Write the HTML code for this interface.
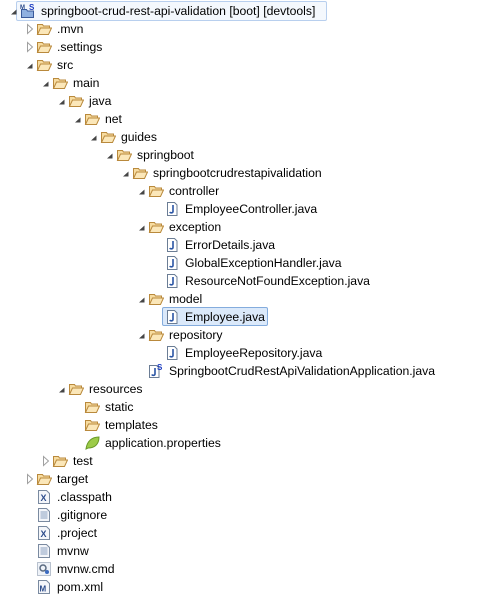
<!DOCTYPE html><html><head><style>
body{margin:0;width:491px;height:599px;background:#fff;overflow:hidden;font-family:"Liberation Sans",sans-serif;font-size:12.2px;color:#000;position:relative}
.r{position:absolute;height:18px;line-height:18px;white-space:nowrap}
.a{position:absolute;top:0;width:10px;height:18px}
.i{position:absolute;top:1px;width:16px;height:16px}
.t{position:absolute;top:0}
.sel{position:absolute;border:1px solid #84acdd;background:#dbe9fa;border-radius:2px}
</style></head><body>
<div class="sel" style="left:16px;top:1px;width:309px;height:18px;background:#f4f8fd;border-color:#b8cfee"></div>
<div class="sel" style="left:162px;top:307px;width:104px;height:17px"></div>
<svg width="0" height="0" style="position:absolute">
<defs>
<symbol id="fo" viewBox="0 0 16 16"><path d="M1.5 3.5h5l1 1.5h6v2H5l-3.5 6.5z" fill="#f7dca0" stroke="#b9893c"/><path d="M1.5 13.5L4.5 7h11l-3 6.5z" fill="#fbe7b9" stroke="#b9893c"/></symbol>
<symbol id="jv" viewBox="0 0 16 16"><path d="M3.5 1.5h7l2.5 2.5v10.5h-9.5z" fill="#fff" stroke="#6b7d95"/><path d="M9 4v6.5c0 1.5-2.5 1.8-3.2.5" fill="none" stroke="#2a55a5" stroke-width="1.6"/></symbol>
<symbol id="ex" viewBox="0 0 10 18"><path d="M2 12.5L7.5 7.5v5z" fill="#454545"/></symbol>
<symbol id="co" viewBox="0 0 10 18"><path d="M2.5 4.5l5 4.5-5 4.5z" fill="#fff" stroke="#a0a0a0"/></symbol>
<symbol id="tx" viewBox="0 0 16 16"><path d="M2.5 1.5h8l3 3v10h-11z" fill="#f4f6fa" stroke="#7a8aa0"/><path d="M4.5 5h7M4.5 7h7M4.5 9h7M4.5 11h7" stroke="#8aa0c0"/></symbol>
<symbol id="xm" viewBox="0 0 16 16"><path d="M2.5 1.5h8l3 3v10h-11z" fill="#f4f6fa" stroke="#7a8aa0"/><text x="4.5" y="12" font-size="9" font-weight="bold" fill="#2a4a8a" font-family="Liberation Sans">X</text></symbol>
<symbol id="pm" viewBox="0 0 16 16"><path d="M2.5 1.5h8l3 3v10h-11z" fill="#f4f6fa" stroke="#7a8aa0"/><text x="3.5" y="12.5" font-size="8" font-weight="bold" fill="#2a4a8a" font-family="Liberation Sans">M</text></symbol>
<symbol id="cm" viewBox="0 0 16 16"><rect x="1.5" y="1.5" width="13" height="13" fill="#eef2f8" stroke="#7a8aa0" stroke-dasharray="1 1"/><circle cx="7" cy="7" r="3" fill="none" stroke="#5a6a80" stroke-width="1.5"/><circle cx="11" cy="11" r="2" fill="#3a6ac0"/></symbol>
<symbol id="lf" viewBox="0 0 16 16"><path d="M2 14C3 6 8 2 15 2c0 8-5 11-11 11z" fill="#9ccb48" stroke="#6a9a28"/></symbol>
<symbol id="pr" viewBox="0 0 16 16"><path d="M1.5 6.5h5l1 1.5h6v6.5h-12z" fill="#8fb0e0" stroke="#3a5a9a"/><text x="0" y="6" font-size="6" fill="#2a4a8a" font-family="Liberation Sans" font-weight="bold">M</text><text x="9" y="7" font-size="8" fill="#1a3ac0" font-family="Liberation Sans" font-weight="bold">S</text></symbol>
<symbol id="sb" viewBox="0 0 16 16"><path d="M1.5 2.5h7l2.5 2.5v9.5h-9.5z" fill="#fff" stroke="#6b7d95"/><path d="M7 5v6c0 1.5-2.5 1.8-3.2.5" fill="none" stroke="#2a55a5" stroke-width="1.6"/><text x="9" y="7" font-size="8" fill="#1a3ac0" font-family="Liberation Sans" font-weight="bold">S</text></symbol>
</defs></svg>
<div id="tree"></div>
<script>
var rows=[
[0,'e','pr','springboot-crud-rest-api-validation [boot] [devtools]'],
[1,'c','fo','.mvn'],[1,'c','fo','.settings'],[1,'e','fo','src'],[2,'e','fo','main'],[3,'e','fo','java'],[4,'e','fo','net'],[5,'e','fo','guides'],[6,'e','fo','springboot'],[7,'e','fo','springbootcrudrestapivalidation'],
[8,'e','fo','controller'],[9,'','jv','EmployeeController.java'],[8,'e','fo','exception'],[9,'','jv','ErrorDetails.java'],[9,'','jv','GlobalExceptionHandler.java'],[9,'','jv','ResourceNotFoundException.java'],
[8,'e','fo','model'],[9,'','jv','Employee.java'],[8,'e','fo','repository'],[9,'','jv','EmployeeRepository.java'],[8,'','sb','SpringbootCrudRestApiValidationApplication.java'],
[3,'e','fo','resources'],[4,'','fo','static'],[4,'','fo','templates'],[4,'','lf','application.properties'],[2,'c','fo','test'],[1,'c','fo','target'],
[1,'','xm','.classpath'],[1,'','tx','.gitignore'],[1,'','xm','.project'],[1,'','tx','mvnw'],[1,'','cm','mvnw.cmd'],[1,'','pm','pom.xml']];
var h='';rows.forEach(function(r,k){var x=41+16*r[0],y=2+18*k;
h+='<div class="r" style="left:0;top:'+y+'px;width:491px">';
if(r[1])h+='<svg class="a" style="left:'+(x-32)+'px" viewBox="0 0 10 18"><use href="#'+(r[1]=='e'?'ex':'co')+'"/></svg>';
h+='<svg class="i" style="left:'+(x-21)+'px" viewBox="0 0 16 16"><use href="#'+r[2]+'"/></svg><span class="t" style="left:'+x+'px">'+r[3]+'</span></div>';});
document.getElementById('tree').innerHTML=h;
</script>
</body></html>
